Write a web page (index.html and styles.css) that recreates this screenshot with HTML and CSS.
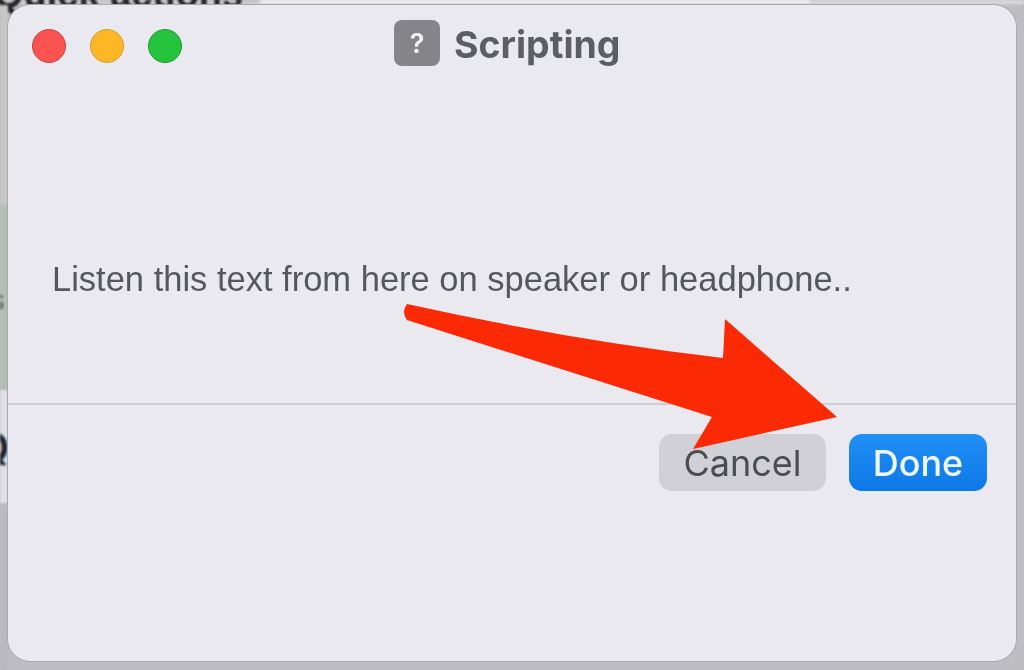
FILE: index.html
```html
<!DOCTYPE html>
<html lang="en">
<head>
<meta charset="utf-8">
<title>Scripting</title>
<link rel="stylesheet" href="styles.css">
</head>
<body>
<div class="stage">
  <div class="backdrop">
    <div class="back-top"><span class="back-title">Quick actions</span></div>
    <div class="back-left"><span class="back-s">s</span><span class="back-q">Q</span></div>
  </div>
  <main class="window">
    <header class="titlebar">
      <div class="lights">
        <span class="light red"></span>
        <span class="light yellow"></span>
        <span class="light green"></span>
      </div>
      <div class="title-group">
        <span class="app-icon">?</span>
        <h1 class="title">Scripting</h1>
      </div>
    </header>
    <section class="message">
      <p class="message-text">Listen this text from here on speaker or headphone..</p>
    </section>
    <footer class="actions">
      <button class="btn btn-cancel">Cancel</button>
      <button class="btn btn-done">Done</button>
    </footer>
  </main>
  <svg class="arrow" viewBox="0 0 1024 670" width="1024" height="670" aria-hidden="true">
    <path d="M407 304 Q570 340 723 358 L725 319 L837 417 L693 449 L712 417 L407 320 Q401 312 407 304 Z" fill="#fb2a05"/>
  </svg>
</div>
</body>
</html>
```
FILE: styles.css
```css
* { box-sizing: border-box; }
html, body { margin: 0; padding: 0; }
body { width: 1024px; height: 670px; overflow: hidden; font-family: Inter, "Liberation Sans", sans-serif; }
.stage {
  position: relative;
  width: 1024px;
  height: 670px;
  padding: 5px 8px 9px;
  display: flex;
  background: #bdbdc2;
  overflow: hidden;
}
.backdrop { position: absolute; inset: 0; filter: blur(0.8px); }
.back-top {
  position: absolute; left: 0; top: 0; width: 100%; height: 5px;
  background: linear-gradient(90deg, #c9c9c9 0, #c9c9c9 260px, #f4f4f4 260px, #f4f4f4 810px, #d9d9d9 810px);
  border-bottom: 2px solid #cfcfd3;
}
.back-title {
  position: absolute; left: -6px; top: -26px;
  font-family: "Liberation Sans", sans-serif;
  font-size: 38px; font-weight: 700; color: #232327; white-space: nowrap; line-height: 40px;
}
.back-left {
  position: absolute; left: 0; top: 5px; width: 8px; height: 665px;
  background: linear-gradient(180deg, #c6c6c8 0, #c6c6c8 200px, #b4bdb6 200px, #b4bdb6 385px, #e0e0e6 385px, #e0e0e6 498px, #b9b9be 498px);
  overflow: hidden;
}
.back-s { position: absolute; left: -10px; top: 278px; font-size: 28px; color: #55605a; }
.back-q { position: absolute; left: -23px; top: 418px; font-size: 42px; font-weight: 600; color: #1d1f2b; line-height: 50px; }

.window {
  position: relative;
  flex: 1;
  display: flex;
  flex-direction: column;
  background: #e9e9ef;
  border-radius: 22px;
  box-shadow: 0 0 0 1px #a9a9ae;
  color: #55565b;
  filter: blur(0.7px);
}
.titlebar { display: flex; align-items: center; height: 82px; padding-left: 24px; }
.lights { display: flex; gap: 24px; }
.light { width: 34px; height: 34px; border-radius: 50%; }
.red { background: #fb5350; border: 1px solid #c9454b; }
.yellow { background: #fdb725; border: 1px solid #d49d2c; }
.green { background: #26c33f; border: 1px solid #1d9c35; }
.title-group { display: flex; align-items: center; gap: 14px; margin: -6px 0 0 212px; }
.app-icon {
  width: 46px; height: 46px; border-radius: 8px;
  background: #858589; color: #f2f2f2;
  display: flex; align-items: center; justify-content: center;
  font-size: 27px; font-weight: 600;
}
.title { margin: 4px 0 0; font-size: 37.4px; font-weight: 700; line-height: 46px; color: #5d5e63; }
.message { flex: 1; padding: 172px 44px 0; border-bottom: 2px solid #cfcfd3; }
.message-text { margin: 0; font-family: "Liberation Sans", sans-serif; font-size: 34.5px; line-height: 40px; white-space: nowrap; color: #56575c; }
.actions { height: 256px; display: flex; justify-content: flex-end; align-items: flex-start; gap: 23px; padding: 29px 29px 0 0; }
.btn {
  height: 57px; border: 0; border-radius: 13px; font-family: inherit;
  font-size: 36px; font-weight: 400; padding: 0;
}
.btn-cancel { width: 167px; background: #d0d0d6; color: #4b4c52; }
.btn-done { width: 138px; font-weight: 500; color: #eef7ff; background: linear-gradient(180deg, #2190f6, #0d78e6); }
.arrow { position: absolute; left: 0; top: 0; filter: blur(0.6px); }
```
